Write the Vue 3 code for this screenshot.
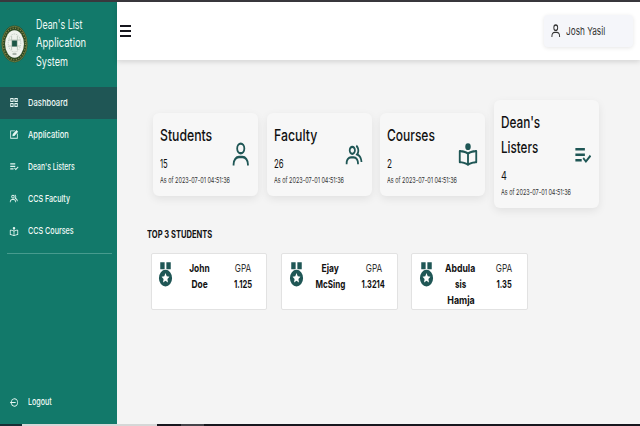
<script setup>
const vFit = {
  mounted(el, { value }) {
    el.style.transform = `scaleX(${value / el.offsetWidth})`
  }
}

const title = [['Dean\'s List', 46], ['Application', 50], ['System', 32]]

const icons = {
  grid: 'M3 2h8v9H3zM13 2h8v9h-8zM3 13h8v9H3zM13 13h8v9h-8zM5.500 4.500v4h3v-4zM15.500 4.500v4h3v-4zM5.500 15.500v4h3v-4zM15.500 15.500v4h3v-4z',
  edit: 'M3 3h12l-2 2H5v14h14v-8l2-2v12H3zM8 16l1-5 9-9 4 4-9 9z',
  list: 'M3 5h12v2.600H3zM3 10.500h12v2.600H3zM3 16h8v2.600H3zM13.700 14.200l2.600 2.700 5-5.100 1.600 1.600-6.600 6.700-4.200-4.300z',
  user: 'M12 2a5 5 0 1 0 0 10 5 5 0 0 0 0-10zm0 8a3 3 0 1 1 0-6 3 3 0 0 1 0 6zm9 11v-1a7 7 0 0 0-7-7h-4a7 7 0 0 0-7 7v1h2v-1a5 5 0 0 1 5-5h4a5 5 0 0 1 5 5v1z',
  group: 'M16.604 11.048a5.670 5.670 0 0 0 .751-3.440c-.179-1.784-1.175-3.361-2.803-4.440l-1.105 1.666c1.119.742 1.800 1.799 1.918 2.974a3.693 3.693 0 0 1-1.072 2.986l-1.192 1.192 1.618.475C18.951 13.701 19 17.957 19 18h2c0-1.789-.956-5.285-4.396-6.952zM9.500 12c2.206 0 4-1.794 4-4s-1.794-4-4-4-4 1.794-4 4 1.794 4 4 4zm0-6c1.103 0 2 .897 2 2s-.897 2-2 2-2-.897-2-2 .897-2 2-2zm1.500 7H8c-3.309 0-6 2.691-6 6v1h2v-1c0-2.206 1.794-4 4-4h3c2.206 0 4 1.794 4 4v1h2v-1c0-3.309-2.691-6-6-6z',
  book: 'M12 2a3 3 0 1 1 0 6 3 3 0 0 1 0-6zM21 8c-.202 0-4.850.029-9 2.008C7.850 8.029 3.202 8 3 8a1 1 0 0 0-1 1v9.883a1 1 0 0 0 1 1c.7 0 4.400.098 8.600 2.025.3.100.6.100.8 0 4.200-1.928 7.900-2.025 8.600-2.025a1 1 0 0 0 1-1V9a1 1 0 0 0-1-1zM4 10.049c1.485.111 4.381.480 7 1.692v7.742c-3-1.175-5.590-1.494-7-1.576zm16 7.858c-1.410.082-4 .401-7 1.576v-7.742c2.619-1.212 5.515-1.581 7-1.692z',
  logout: 'M2 12l5-4v3h9v2H7v3zM5 7.500A9 9 0 1 1 5 16.500l2-1a7 7 0 1 0 0-7z',
  medal: 'M6 1h5v6H6zM13 1h5v6h-5zM12 7.500a7.500 7.200 0 1 1 0 14.400 7.500 7.200 0 0 1 0-14.400zM12 10.200l-1.400 2.800-3.100.4 2.300 2.100-.6 3 2.800-1.500 2.800 1.500-.6-3 2.300-2.100-3.100-.4z'
}

const menu = [
  { label: 'Dashboard', icon: 'grid', width: 40, active: true },
  { label: 'Application', icon: 'edit', width: 40.500 },
  { label: 'Dean\'s Listers', icon: 'list', width: 47 },
  { label: 'CCS Faculty', icon: 'group', width: 42 },
  { label: 'CCS Courses', icon: 'book', width: 46 }
]

const stats = [
  { lines: [['Students', 52]], value: '15', vw: 8, icon: 'user' },
  { lines: [['Faculty', 43]], value: '26', vw: 9.500, icon: 'group' },
  { lines: [['Courses', 48]], value: '2', vw: 5, icon: 'book' },
  { lines: [['Dean\'s', 39], ['Listers', 37]], value: '4', vw: 5.500, icon: 'list' }
]

const students = [
  { name: [['John', 20.500], ['Doe', 16]], gpa: '1.125', gw: 18 },
  { name: [['Ejay', 17], ['McSing', 30]], gpa: '1.3214', gw: 23 },
  { name: [['Abdula', 30], ['sis', 11], ['Hamja', 27.500]], gpa: '1.35', gw: 15 }
]
</script>

<template>
  <div class="screen">
    <div class="edge-top"></div>
    <div class="layout">
      <aside class="sidebar">
        <header class="brand">
          <svg class="seal" viewBox="0 0 28 38" preserveAspectRatio="none">
            <ellipse cx="14" cy="19" rx="13.500" ry="18.500" fill="#2f4a24" />
            <ellipse cx="14" cy="19" rx="12.900" ry="17.800" fill="none" stroke="#8f9750" stroke-width=".6" />
            <ellipse cx="14" cy="19" rx="11.400" ry="15.800" fill="none" stroke="#8f8e50" stroke-width="1.300" stroke-dasharray="1 1.700" />
            <ellipse cx="14" cy="19" rx="9.800" ry="13.800" fill="#eef2ec" />
            <ellipse cx="14" cy="18" rx="6.500" ry="9" fill="none" stroke="#b9c4ba" stroke-width="1" stroke-dasharray="1 1" />
            <path d="M8 15h12M8 21h12M11 11v14M17 11v14" stroke="#a9b9ab" stroke-width=".7" />
            <rect x="11.500" y="15.500" width="5" height="6" fill="#1b5544" />
            <path d="M12 29h4" stroke="#627366" />
          </svg>
          <div class="brand-text">
            <span v-for="t in title" :key="t[0]" v-fit="t[1]" class="t">{{ t[0] }}</span>
          </div>
        </header>
        <nav>
          <a v-for="m in menu" :key="m.label" class="item" :class="{ active: m.active }">
            <svg viewBox="0 0 24 24" preserveAspectRatio="none"><path fill-rule="evenodd" :d="icons[m.icon]" /></svg>
            <span v-fit="m.width" class="t">{{ m.label }}</span>
          </a>
        </nav>
        <div class="rule"></div>
        <a class="item logout">
          <svg viewBox="0 0 24 24" preserveAspectRatio="none"><path fill-rule="evenodd" :d="icons.logout" /></svg>
          <span v-fit="24" class="t">Logout</span>
        </a>
      </aside>

      <main>
        <div class="navbar">
          <div class="burger"><i></i><i></i><i></i></div>
          <div class="profile">
            <svg viewBox="0 0 24 24" preserveAspectRatio="none"><path :d="icons.user" /></svg>
            <span v-fit="39" class="t">Josh Yasil</span>
          </div>
        </div>

        <section class="stats">
          <article v-for="s in stats" :key="s.icon" class="stat">
            <div class="stat-info">
              <h2><span v-for="l in s.lines" :key="l[0]" v-fit="l[1]" class="t">{{ l[0] }}</span></h2>
              <span v-fit="s.vw" class="t value">{{ s.value }}</span>
              <span v-fit="70" class="t date">As of 2023-07-01 04:51:36</span>
            </div>
            <svg :class="s.icon" viewBox="0 0 24 24" preserveAspectRatio="none"><path fill-rule="evenodd" :d="icons[s.icon]" /></svg>
          </article>
        </section>

        <h3><span v-fit="65" class="t">TOP 3 STUDENTS</span></h3>

        <section class="students">
          <article v-for="s in students" :key="s.gpa" class="student">
            <svg viewBox="0 0 24 24" preserveAspectRatio="none"><path fill-rule="evenodd" :d="icons.medal" /></svg>
            <div class="col name">
              <span v-for="n in s.name" :key="n[0]" v-fit="n[1]" class="t">{{ n[0] }}</span>
            </div>
            <div class="col gpa">
              <span v-fit="16.500" class="t light">GPA</span>
              <span v-fit="s.gw" class="t">{{ s.gpa }}</span>
            </div>
          </article>
        </section>
      </main>
    </div>
    <footer class="edge-bottom"><i class="a"></i><i class="b"></i><i class="c"></i><i class="d"></i><i class="e"></i></footer>
  </div>
</template>

<style>
body { margin: 0; overflow: hidden; }
</style>

<style scoped>
* { box-sizing: border-box; }
.screen {
  width: 640px;
  height: 426px;
  display: flex;
  flex-direction: column;
  overflow: hidden;
  background: #f4f4f4;
  color: #111;
  font-family: Inter, "Liberation Sans", sans-serif;
}
.t { display: inline-block; white-space: nowrap; transform-origin: left center; }
.edge-top { height: 2px; background: #39383d; flex: none; }
.layout { display: flex; height: 422px; flex: none; }
.sidebar {
  width: 117px;
  flex: none;
  display: flex;
  flex-direction: column;
  background: #12796a;
  color: #f0faf7;
}
.brand { height: 84.500px; display: flex; flex: none; }
.seal { width: 27px; height: 38px; margin: 23px 8px 0 1px; flex: none; }
.brand-text {
  display: flex;
  flex-direction: column;
  align-items: flex-start;
  padding-top: 14px;
  font-size: 12.500px;
  line-height: 18.300px;
}
.item {
  height: 32.150px;
  display: flex;
  align-items: center;
  gap: 9px;
  padding-left: 9px;
  font-size: 9.500px;
  font-weight: 500;
}
.item svg { width: 10px; height: 11px; fill: #e5f6f1; flex: none; }
.item .t { line-height: 14px; }
.item.active { background: #1f5655; }
.rule { height: 1px; margin: 6px 5px 0 7px; background: #479b8e; }
.logout { margin-top: auto; margin-bottom: 5.500px; }
main { flex: 1; min-width: 0; }
.navbar {
  height: 58px;
  display: flex;
  justify-content: space-between;
  background: #fff;
  padding: 13px 7px 0 3px;
  box-shadow: 0 2px 5px rgba(0, 0, 0, .13);
}
.burger { width: 11px; display: flex; flex-direction: column; gap: 3px; padding-top: 10px; }
.burger i { height: 2px; background: #17171e; }
.profile {
  width: 89px;
  height: 32px;
  display: flex;
  align-items: center;
  gap: 5px;
  padding-left: 5.500px;
  background: #f5f6fa;
  border-radius: 4px;
  box-shadow: 0 1px 4px rgba(0, 0, 0, .1);
  font-size: 11px;
  color: #333;
}
.profile svg { width: 11.500px; height: 16px; fill: #333; flex: none; }
.profile .t { line-height: 14px; padding-bottom: 1px; }
.stats { display: flex; align-items: center; gap: 8.700px; padding: 40px 0 0 36px; }
.stat {
  width: 105px;
  flex: none;
  display: flex;
  align-items: center;
  padding: 10px 6px 8px 7px;
  background: #f7f7f7;
  border-radius: 6px;
  box-shadow: 0 3px 9px rgba(0, 0, 0, .08);
}
.stat-info { width: 70px; flex: none; display: flex; flex-direction: column; align-items: flex-start; }
.stat h2 {
  display: flex;
  flex-direction: column;
  align-items: flex-start;
  margin: 0 0 7px;
  font-size: 16px;
  font-weight: 500;
  line-height: 25px;
}
.value { font-size: 11.500px; line-height: 18px; }
.date { font-size: 8px; line-height: 15px; color: #333; }
.stat svg { fill: #1f5655; flex: none; }
.stat .user { width: 21.500px; height: 29px; margin: -2px 0 0 -.500px; }
.stat .group { width: 21px; height: 28px; margin-top: -1px; }
.stat .book { width: 22px; height: 27px; margin-top: -2px; }
.stat .list { width: 19px; height: 24px; margin-left: 1.500px; }
h3 { margin: 18px 0 0 30px; font-size: 10px; line-height: 16px; font-weight: 700; }
.students { display: flex; gap: 13.700px; padding: 10.500px 0 0 33.500px; }
.student {
  width: 116.700px;
  height: 57.500px;
  flex: none;
  display: flex;
  align-items: flex-start;
  padding-top: 6px;
  background: #fff;
  border: 1px solid #e2e2e2;
  border-radius: 2px;
}
.student svg { width: 21px; height: 28px; margin: 1px 0 0 3.800px; fill: #1f5655; flex: none; }
.col { display: flex; flex-direction: column; align-items: center; font-size: 11px; line-height: 16.300px; font-weight: 700; }
.col .t { transform-origin: center; }
.name { width: 47px; }
.gpa { width: 40px; }
.light { font-weight: 400; color: #333; }
.edge-bottom { height: 2px; display: flex; flex: none; background: #17171e; }
.a { width: 22px; background: #172f35; }
.b { width: 135px; background: #d5d7d7; }
.c { width: 24px; background: #17171e; }
.d { width: 23px; background: #45444a; }
.e { flex: 1; background: #17171e; }
</style>
